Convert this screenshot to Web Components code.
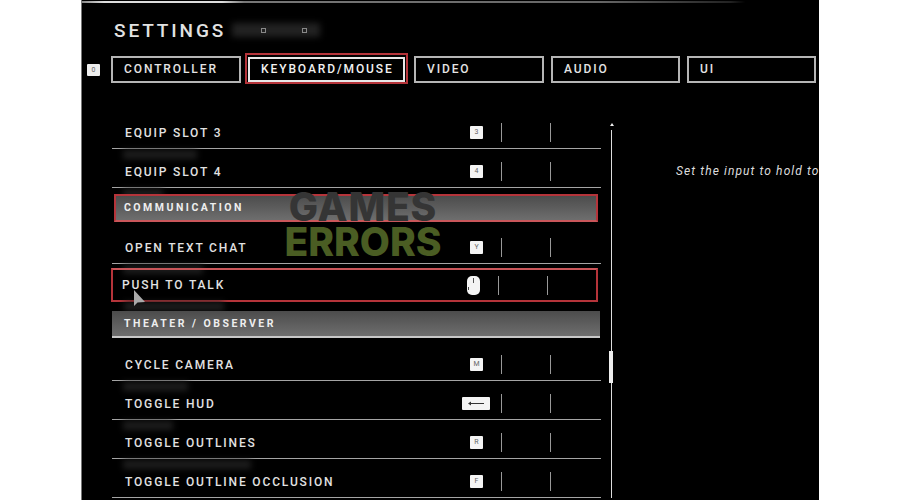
<!DOCTYPE html>
<html>
<head>
<meta charset="utf-8">
<title>Settings</title>
<style>
  html, body { margin: 0; height: 100%; background: #fff; overflow: hidden; }
</style>
</head>
<body>
<settings-screen>
  <settings-tab-bar slot="tabs"></settings-tab-bar>
  <bind-row name="EQUIP SLOT 3" keyname="3" ghost="74"></bind-row>
  <bind-row name="EQUIP SLOT 4" keyname="4" ghost="40"></bind-row>
  <bind-header name="COMMUNICATION" marked></bind-header>
  <bind-row name="OPEN TEXT CHAT" keyname="Y" ghost="80"></bind-row>
  <bind-row name="PUSH TO TALK" keyname="mouse" marked ghost="100"></bind-row>
  <bind-header name="THEATER / OBSERVER"></bind-header>
  <bind-row name="CYCLE CAMERA" keyname="M" ghost="65"></bind-row>
  <bind-row name="TOGGLE HUD" keyname="wide" ghost="50"></bind-row>
  <bind-row name="TOGGLE OUTLINES" keyname="R" ghost="128"></bind-row>
  <bind-row name="TOGGLE OUTLINE OCCLUSION" keyname="F"></bind-row>
</settings-screen>

<script>
  const FONT = '"Roboto", "Liberation Sans", sans-serif';

  class SettingsScreen extends HTMLElement {
    constructor() {
      super();
      this.shadow = this.attachShadow({ mode: "open" });
    }

    connectedCallback() {
      this.shadow.innerHTML = `
        <style>
          :host {
            display: block;
            width: 900px;
            height: 500px;
            background: #fff;
            overflow: hidden;
            position: relative;
            font-family: ${FONT};
          }
          .panel {
            box-sizing: border-box;
            margin-left: 81px;
            width: 738px;
            height: 500px;
            background: #000;
            border-left: 1px solid #777;
            padding-top: 1px;
            overflow: hidden;
          }
          .topline {
            height: 2px;
            background: linear-gradient(90deg, #888 0, #ddd 3%, #ddd 19%, #777 22%, #666 70%, #222 88%, #000 90%);
          }
          .title {
            display: flex;
            align-items: center;
            height: 20px;
            margin: 17px 0 0 32px;
          }
          h1 {
            margin: 0;
            font: 500 19px ${FONT};
            letter-spacing: 2.9px;
            color: #e2e2e2;
          }
          .ghost {
            position: relative;
            width: 88px;
            height: 14px;
            margin-left: 6px;
            display: flex;
            justify-content: space-between;
            padding: 0 13px 0 29px;
            box-sizing: border-box;
            align-items: center;
          }
          .ghost::before {
            content: "";
            position: absolute;
            inset: 0;
            background: #222;
            filter: blur(3px);
          }
          .ghost i {
            position: relative;
            width: 3px;
            height: 3px;
            border: 1px solid #888;
          }
          .body {
            display: flex;
            margin-top: 27px;
          }
          .list {
            width: 489px;
            margin-left: 30px;
            flex: none;
          }
          .scroll {
            position: relative;
            flex: none;
            width: 3px;
            margin: 13px 0 0 9px;
            display: flex;
            flex-direction: column;
            align-items: center;
          }
          .scroll b {
            width: 0;
            height: 0;
            border: 2px solid transparent;
            border-top: 0;
            border-bottom: 3px solid #eee;
            margin-bottom: 4px;
          }
          .scroll u {
            display: block;
            flex: 1;
            width: 1.5px;
            background: #ddd;
            height: 380px;
          }
          .thumb {
            position: absolute;
            left: -1px;
            top: 228px;
            width: 4px;
            height: 32px;
            background: #eee;
          }
          .help {
            margin: 54px 0 0 63px;
            white-space: nowrap;
            font: italic 400 12px ${FONT};
            letter-spacing: 1.1px;
            color: #ddd;
          }
          .mark {
            position: absolute;
            left: 133px;
            top: 290px;
            width: 14px;
            height: 18px;
          }
          .logo {
            position: absolute;
            left: 284px;
            top: 189px;
            font: 800 39px/35px "Inter", "Liberation Sans", sans-serif;
            text-align: center;
            width: 158px;
            pointer-events: none;
          }
          .logo span { display: block; color: #353535; letter-spacing: .8px; }
          .logo span + span { color: #4a5d23; letter-spacing: 0; }
        </style>
        <div class="panel">
          <div class="topline"></div>
          <div class="title">
            <h1>SETTINGS</h1>
            <div class="ghost"><i></i><i></i></div>
          </div>
          <slot name="tabs"></slot>
          <div class="body">
            <div class="list"><slot></slot></div>
            <div class="scroll"><b></b><u></u><div class="thumb"></div></div>
            <div class="help">Set the input to hold to</div>
          </div>
        </div>
        <div class="logo"><span>GAMES</span><span>ERRORS</span></div>
        <svg class="mark" viewBox="0 0 14 18"><path d="M1 0v16l3.500-3.500L12 12z" fill="#aaa"/></svg>
      `;
    }
  }

  class SettingsTabBar extends HTMLElement {
    constructor() {
      super();
      this.shadow = this.attachShadow({ mode: "open" });
    }

    connectedCallback() {
      var tabs = ["CONTROLLER", "KEYBOARD/MOUSE", "VIDEO", "AUDIO", "UI"];
      this.shadow.innerHTML = `
        <style>
          :host {
            display: flex;
            align-items: center;
            margin: 16px 0 0 5px;
            gap: 7px;
            font-family: ${FONT};
          }
          .badge {
            width: 13px;
            height: 12px;
            background: #eee;
            color: #666;
            border-radius: 1px;
            font-size: 7px;
            line-height: 12px;
            text-align: center;
            margin-right: 4px;
          }
          .tab {
            box-sizing: border-box;
            width: 130px;
            height: 27px;
            border: 2px solid #b5b5b5;
            color: #e4e4e4;
            font-size: 12px;
            font-weight: 500;
            line-height: 23px;
            letter-spacing: 1.9px;
            padding-left: 11px;
            white-space: nowrap;
          }
          .tab:nth-child(n+6) { width: 129px; }
          .tab.on {
            position: relative;
            width: 157px;
            height: 25px;
            line-height: 21px;
            margin-right: 2px;
            border-color: #e8e8e8;
            color: #f2f2f2;
          }
          .tab.on::after {
            content: "";
            position: absolute;
            inset: -6px -5px -4px -5px;
            border: 2px solid #b5343a;
          }
        </style>
        <div class="badge">0</div>
        ${tabs.map((t, i) => `<div class="tab ${i == 1 ? "on" : ""}">${t}</div>`).join("")}
      `;
    }
  }

  class BindRow extends HTMLElement {
    constructor() {
      super();
      this.shadow = this.attachShadow({ mode: "open" });
    }

    connectedCallback() {
      var key = this.getAttribute("keyname");
      var cap = `<span class="cap">${key}</span>`;
      if (key == "wide") cap = `<span class="cap wide"><svg width="16" height="5" viewBox="0 0 16 5"><path d="M0 2.500l3-2v1.500h13v1H3V4.500z" fill="#333"/></svg></span>`;
      if (key == "mouse") cap = `<span class="cap mouse"><i></i><i class="low"></i></span>`;
      var ghost = this.getAttribute("ghost");
      this.shadow.innerHTML = `
        <style>
          :host {
            display: block;
            box-sizing: border-box;
            height: 39px;
            padding-top: 7px;
            position: relative;
            font-family: ${FONT};
            border-bottom: 1.5px solid #a5a5a5;
          }
          :host([marked]) {
            height: 34px;
            padding-top: 0;
            margin: 4px 0 0 -1px;
            width: 487px;
            border: 2px solid #b5343a;
            border-top-color: #c9565a;
          }
          .row {
            display: grid;
            grid-template-columns: 1fr 52px 49px 51px;
            align-items: center;
            height: 100%;
            padding-left: 13px;
          }
          :host([marked]) .row { padding-left: 9px; grid-template-columns: 1fr 52px 49px 49px; }
          .name {
            font-size: 12px;
            font-weight: 500;
            letter-spacing: 1.85px;
            color: #e2e2e2;
            white-space: nowrap;
          }
          .key {
            display: flex;
            justify-content: flex-end;
            padding-right: 18px;
            height: 19px;
            align-items: center;
          }
          .slot { height: 19px; border-left: 1px solid #999; }
          .cap {
            width: 13px;
            height: 13px;
            background: #f4f4f4;
            border-radius: 1px;
            color: #666;
            font-size: 7px;
            line-height: 13px;
            text-align: center;
            display: block;
          }
          .wide { width: 28px; display: flex; align-items: center; justify-content: center; margin-right: -7px; flex: none; }
          .mouse { height: 19px; border-radius: 5px; position: relative; }
          .mouse i { position: absolute; left: 6px; top: 2px; width: 1px; height: 5px; background: #555; }
          .mouse i.low { left: 1px; top: 11px; height: 3px; background: #444; }
          .ghost {
            position: absolute;
            left: 11px;
            top: 100%;
            height: 9px;
            margin-top: 2px;
            background: #1d1d1d;
            filter: blur(3px);
          }
        </style>
        <div class="row">
          <div class="name">${this.getAttribute("name")}</div>
          <div class="key">${cap}</div>
          <div class="slot"></div>
          <div class="slot"></div>
        </div>
        ${ghost ? `<div class="ghost" style="width:${ghost}px"></div>` : ""}
      `;
    }
  }

  class BindHeader extends HTMLElement {
    constructor() {
      super();
      this.shadow = this.attachShadow({ mode: "open" });
    }

    connectedCallback() {
      this.shadow.innerHTML = `
        <style>
          :host {
            display: block;
            box-sizing: border-box;
            width: 488px;
            height: 27px;
            margin: 9px 0 4px;
            background: linear-gradient(180deg, #4c4c4c 0, #6e6e6e 100%);
            border-bottom: 2px solid #c8c8c8;
            color: #eee;
            font: 700 10.500px/25px ${FONT};
            letter-spacing: 2.5px;
            padding-left: 12px;
            position: relative;
          }
          :host([marked]) {
            margin: 6px 0 3px 2px;
            height: 28px;
            width: 484px;
            border: 2px solid #b5343a;
            border-bottom-color: #c9565a;
            padding-left: 8px;
            line-height: 24px;
          }
        </style>
        ${this.getAttribute("name")}
      `;
    }
  }

  customElements.define("settings-screen", SettingsScreen);
  customElements.define("settings-tab-bar", SettingsTabBar);
  customElements.define("bind-row", BindRow);
  customElements.define("bind-header", BindHeader);
</script>
</body>
</html>
